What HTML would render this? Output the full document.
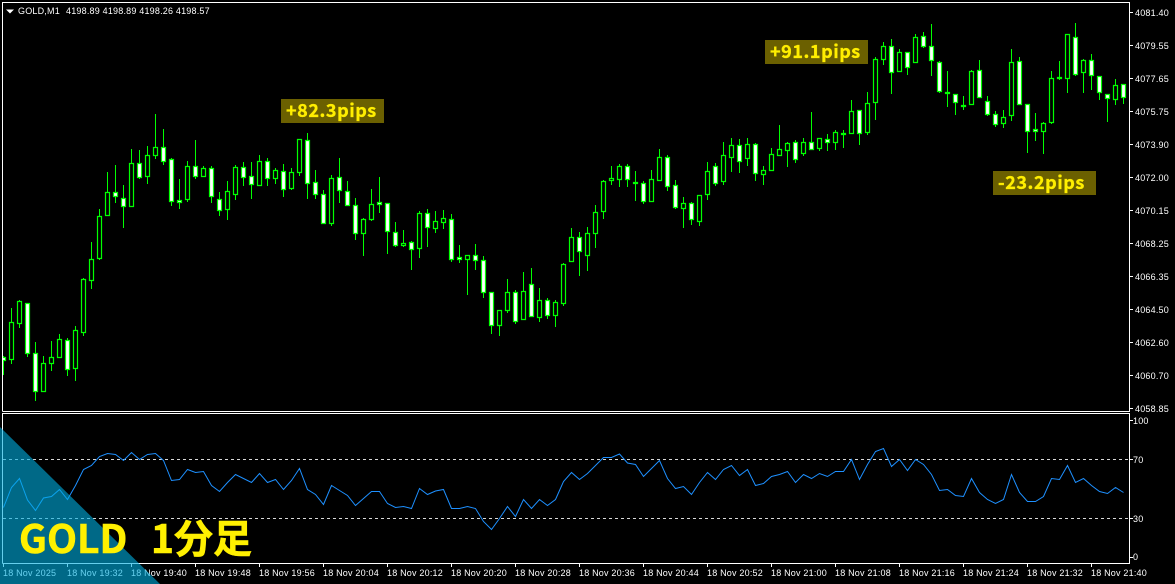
<!DOCTYPE html>
<html><head><meta charset="utf-8"><title>GOLD M1</title>
<style>
html,body{margin:0;padding:0;background:#000;width:1175px;height:584px;overflow:hidden}
svg{display:block}
.t{font:9px "Liberation Sans",sans-serif;fill:#fff;letter-spacing:.2px}
.p{font:bold 18px "Noto Sans CJK JP","Liberation Sans",sans-serif;fill:#ffee00;stroke:#ffee00;stroke-width:.35px;letter-spacing:.55px}
.g{font:bold 39px "Noto Sans CJK JP","Liberation Sans",sans-serif;fill:#fff000;stroke:#fff000;stroke-width:.6px}
</style></head><body>
<svg width="1175" height="584" viewBox="0 0 1175 584" xmlns="http://www.w3.org/2000/svg">
<defs><clipPath id="c"><rect x="3" y="3" width="1126" height="408"/></clipPath></defs>
<rect width="1175" height="584" fill="#000"/>
<g clip-path="url(#c)" stroke="#00ff00" stroke-width="1.2">
<path fill="none" stroke-width="1" d="M3.5 356V375M11.5 308V364M19.5 300V328M27.5 303V357M35.5 342V401M43.5 356V392M51.5 341V371M59.5 334V358M67.5 338V376M75.5 326V381M83.5 278V336M91.5 242V289M99.5 209V260M107.5 172V216M115.5 165V203M123.5 185V228M131.5 149V207M139.5 150V179M147.5 146V184M155.5 114V159M163.5 129V165M171.5 158V206M179.5 179V209M187.5 161V202M195.5 140V179M203.5 166V177M211.5 166V203M219.5 192V216M227.5 181V220M235.5 165V200M243.5 162V186M251.5 162V199M259.5 155V186M267.5 158V186M275.5 168V184M283.5 164V197M291.5 168V190M299.5 139V176M307.5 133V199M315.5 170V199M323.5 190V224M331.5 175V226M339.5 158V203M347.5 181V206M355.5 198V240M363.5 218V256M371.5 189V221M379.5 177V213M387.5 203V254M395.5 222V247M403.5 230V247M411.5 241V270M419.5 211V258M427.5 209V247M435.5 211V233M443.5 210V229M451.5 214V262M459.5 245V263M467.5 255V295M475.5 244V270M483.5 256V298M491.5 292V334M499.5 310V336M507.5 279V313M515.5 290V324M523.5 272V320M531.5 268V317M539.5 288V322M547.5 298V319M555.5 300V327M563.5 263V306M571.5 228V262M579.5 232V276M587.5 227V271M595.5 205V248M603.5 180V219M611.5 166V185M619.5 164V187M627.5 164V187M635.5 171V201M643.5 181V204M651.5 170V202M659.5 149V181M667.5 155V191M675.5 180V209M683.5 197V228M691.5 202V225M699.5 195V226M707.5 162V200M715.5 163V186M723.5 142V185M731.5 138V172M739.5 139V173M747.5 138V166M755.5 143V181M763.5 166V185M771.5 148V171M779.5 125V156M787.5 142V167M795.5 140V163M803.5 138V156M811.5 112V150M819.5 138V151M827.5 134V151M835.5 130V150M843.5 130V148M851.5 100V134M859.5 110V145M867.5 92V135M875.5 57V120M883.5 42V65M891.5 39V94M899.5 49V72M907.5 52V75M915.5 34V63M923.5 32V48M931.5 24V76M939.5 61V93M947.5 71V107M955.5 94V115M963.5 96V110M971.5 70V105M979.5 60V98M987.5 96V116M995.5 111V127M1003.5 110V128M1011.5 49V121M1019.5 57V105M1027.5 104V153M1035.5 113V141M1043.5 122V154M1051.5 71V124M1059.5 61V80M1067.5 34V93M1075.5 23V76M1083.5 59V93M1091.5 54V90M1099.5 76V100M1107.5 94V122M1115.5 79V105M1123.5 84V104"/>
<path fill="#000" d="M9.5 322.5h4V359.5h-4zM17.5 301.5h4V323.5h-4zM41.5 363.5h4V391.5h-4zM49.5 357.5h4V363.5h-4zM57.5 339.5h4V357.5h-4zM73.5 330.5h4V368.5h-4zM81.5 279.5h4V332.5h-4zM89.5 259.5h4V280.5h-4zM97.5 216.5h4V258.5h-4zM105.5 192.5h4V215.5h-4zM129.5 163.5h4V206.5h-4zM145.5 155.5h4V176.5h-4zM153.5 147.5h4V155.5h-4zM185.5 166.5h4V199.5h-4zM201.5 168.5h4V176.5h-4zM225.5 191.5h4V209.5h-4zM233.5 167.5h4V194.5h-4zM257.5 161.5h4V185.5h-4zM273.5 170.5h4V178.5h-4zM289.5 172.5h4V188.5h-4zM297.5 139.5h4V172.5h-4zM329.5 178.5h4V223.5h-4zM361.5 219.5h4V233.5h-4zM369.5 204.5h4V219.5h-4zM401.5 243.5h4V245.5h-4zM417.5 213.5h4V248.5h-4zM433.5 221.5h4V228.5h-4zM441.5 218.5h4V222.5h-4zM465.5 255.5h4V259.5h-4zM497.5 310.5h4V325.5h-4zM505.5 292.5h4V310.5h-4zM521.5 291.5h4V319.5h-4zM537.5 300.5h4V317.5h-4zM553.5 302.5h4V315.5h-4zM561.5 264.5h4V303.5h-4zM569.5 237.5h4V261.5h-4zM585.5 233.5h4V255.5h-4zM593.5 212.5h4V233.5h-4zM601.5 181.5h4V211.5h-4zM609.5 178.5h4V180.5h-4zM617.5 166.5h4V179.5h-4zM649.5 179.5h4V201.5h-4zM657.5 157.5h4V180.5h-4zM681.5 203.5h4V208.5h-4zM697.5 195.5h4V221.5h-4zM705.5 171.5h4V194.5h-4zM721.5 155.5h4V181.5h-4zM729.5 145.5h4V157.5h-4zM745.5 144.5h4V158.5h-4zM761.5 170.5h4V174.5h-4zM769.5 154.5h4V170.5h-4zM777.5 149.5h4V155.5h-4zM785.5 143.5h4V150.5h-4zM801.5 142.5h4V153.5h-4zM817.5 138.5h4V148.5h-4zM833.5 132.5h4V142.5h-4zM849.5 111.5h4V133.5h-4zM865.5 103.5h4V132.5h-4zM873.5 59.5h4V102.5h-4zM881.5 46.5h4V59.5h-4zM897.5 52.5h4V71.5h-4zM913.5 37.5h4V62.5h-4zM969.5 71.5h4V104.5h-4zM1001.5 117.5h4V123.5h-4zM1009.5 62.5h4V115.5h-4zM1041.5 123.5h4V131.5h-4zM1049.5 78.5h4V122.5h-4zM1065.5 34.5h4V78.5h-4zM1081.5 60.5h4V72.5h-4zM1113.5 85.5h4V99.5h-4z"/>
<path fill="#fff" d="M1.5 357.5h4V360.5h-4zM25.5 303.5h4V353.5h-4zM33.5 353.5h4V391.5h-4zM65.5 340.5h4V369.5h-4zM113.5 192.5h4V196.5h-4zM121.5 198.5h4V206.5h-4zM137.5 163.5h4V177.5h-4zM161.5 147.5h4V161.5h-4zM169.5 159.5h4V201.5h-4zM177.5 200.5h4V202.5h-4zM193.5 166.5h4V176.5h-4zM209.5 168.5h4V196.5h-4zM217.5 199.5h4V210.5h-4zM241.5 167.5h4V177.5h-4zM249.5 176.5h4V184.5h-4zM265.5 161.5h4V178.5h-4zM281.5 171.5h4V189.5h-4zM305.5 140.5h4V183.5h-4zM313.5 182.5h4V194.5h-4zM321.5 194.5h4V223.5h-4zM337.5 177.5h4V190.5h-4zM345.5 191.5h4V205.5h-4zM353.5 205.5h4V233.5h-4zM377.5 202.5h4V204.5h-4zM385.5 203.5h4V231.5h-4zM393.5 232.5h4V245.5h-4zM409.5 242.5h4V249.5h-4zM425.5 213.5h4V227.5h-4zM449.5 219.5h4V259.5h-4zM457.5 257.5h4V259.5h-4zM473.5 255.5h4V260.5h-4zM481.5 260.5h4V292.5h-4zM489.5 292.5h4V325.5h-4zM513.5 292.5h4V321.5h-4zM529.5 284.5h4V316.5h-4zM545.5 300.5h4V315.5h-4zM577.5 237.5h4V251.5h-4zM625.5 166.5h4V179.5h-4zM641.5 183.5h4V201.5h-4zM665.5 157.5h4V186.5h-4zM673.5 185.5h4V207.5h-4zM689.5 203.5h4V219.5h-4zM713.5 166.5h4V183.5h-4zM737.5 145.5h4V161.5h-4zM753.5 144.5h4V173.5h-4zM793.5 142.5h4V159.5h-4zM809.5 142.5h4V149.5h-4zM825.5 139.5h4V142.5h-4zM857.5 110.5h4V133.5h-4zM889.5 46.5h4V72.5h-4zM905.5 52.5h4V67.5h-4zM921.5 36.5h4V46.5h-4zM929.5 46.5h4V60.5h-4zM937.5 62.5h4V91.5h-4zM953.5 94.5h4V102.5h-4zM977.5 70.5h4V97.5h-4zM985.5 101.5h4V114.5h-4zM993.5 114.5h4V124.5h-4zM1017.5 61.5h4V104.5h-4zM1025.5 104.5h4V131.5h-4zM1033.5 129.5h4V131.5h-4zM1057.5 77.5h4V78.5h-4zM1073.5 37.5h4V74.5h-4zM1089.5 60.5h4V75.5h-4zM1097.5 76.5h4V92.5h-4zM1105.5 94.5h4V98.5h-4zM1121.5 84.5h4V97.5h-4z"/>
<path fill="#00ff00" d="M633.5 182.5h4V183.5h-4zM841.5 133.5h4V134.5h-4zM945.5 92.5h4V93.5h-4zM961.5 105.5h4V106.5h-4z"/>
</g>
<!-- frames -->
<path fill="none" stroke="#fff" d="M2.5 411.5V2.5H1129.5V411.5H2.5M2.5 563.5V413.5H1129.5V563.5H2.5"/>
<!-- price ticks -->
<path stroke="#fff" fill="none" d="M1130 12.5h3M1130 45.5h3M1130 78.5h3M1130 111.5h3M1130 144.5h3M1130 177.5h3M1130 210.5h3M1130 243.5h3M1130 276.5h3M1130 309.5h3M1130 342.5h3M1130 375.5h3M1130 408.5h3M1130 420.5h3M1130 459.5h3M1130 518.5h3M1130 557.5h3"/>
<path stroke="#fff" fill="none" d="M3.5 564v3M67.5 564v3M131.5 564v3M195.5 564v3M259.5 564v3M323.5 564v3M387.5 564v3M451.5 564v3M515.5 564v3M579.5 564v3M643.5 564v3M707.5 564v3M771.5 564v3M835.5 564v3M899.5 564v3M963.5 564v3M1027.5 564v3M1091.5 564v3"/>
<!-- RSI -->
<path stroke="#d8d8d8" stroke-dasharray="3 3" fill="none" d="M3 459.5H1129M3 518.5H1129"/>
<polyline fill="none" stroke="#1e90ff" stroke-width="1" points="3.5,507.5 11.5,487.5 19.5,478.5 27.5,500 35.5,510.5 43.5,498 51.5,496.5 59.5,489.5 67.5,499.5 75.5,485.5 83.5,469.5 91.5,465.5 99.5,456.5 107.5,453.5 115.5,454.5 123.5,460.5 131.5,452.5 139.5,459.5 147.5,454.5 155.5,453.5 163.5,460.5 171.5,480.5 179.5,479.5 187.5,469.5 195.5,472.5 203.5,471.5 211.5,485.5 219.5,491.5 227.5,482.5 235.5,474.5 243.5,478.5 251.5,482.5 259.5,473.5 267.5,482.5 275.5,479.5 283.5,489.5 291.5,480.5 299.5,468.5 307.5,489.5 315.5,494.5 323.5,504.5 331.5,485.5 339.5,490.5 347.5,495.5 355.5,505.5 363.5,498.5 371.5,491.5 379.5,491.5 387.5,503.5 395.5,507.5 403.5,506.5 411.5,508.5 419.5,488.5 427.5,494.5 435.5,491 443.5,489.5 451.5,508.5 459.5,508.5 467.5,506.5 475.5,508.5 483.5,521.5 491.5,529.5 499.5,518.5 507.5,506.5 515.5,516.5 523.5,499.5 531.5,508.5 539.5,499.5 547.5,505.5 555.5,499.5 563.5,481.5 571.5,472.5 579.5,479.5 587.5,473.5 595.5,465.5 603.5,457.5 611.5,457.5 619.5,454 627.5,463 635.5,464.5 643.5,476.5 651.5,468.5 659.5,460.5 667.5,478.5 675.5,488.5 683.5,486.5 691.5,494.5 699.5,482.5 707.5,472.5 715.5,479.5 723.5,469.5 731.5,465.5 739.5,475.5 747.5,469.5 755.5,485.5 763.5,483.5 771.5,476.5 779.5,474.5 787.5,471.5 795.5,482.5 803.5,474.5 811.5,478.5 819.5,473.5 827.5,476.5 835.5,471.5 843.5,471.5 851.5,459.5 859.5,479.5 867.5,464.5 875.5,451.5 883.5,448.5 891.5,466.5 899.5,459.5 907.5,470.5 915.5,459.5 923.5,464.5 931.5,474.5 939.5,490.5 947.5,489.5 955.5,495.5 963.5,496.5 971.5,478.5 979.5,492.5 987.5,499.5 995.5,503.5 1003.5,499.5 1011.5,474.5 1019.5,492.5 1027.5,501.5 1035.5,501.5 1043.5,496.5 1051.5,478.5 1059.5,479.5 1067.5,465.5 1075.5,482.5 1083.5,478.5 1091.5,485.5 1099.5,491.5 1107.5,493.5 1115.5,487.5 1123.5,492.5"/>
<!-- header -->
<path fill="#fff" d="M6 9.5h8l-4 4z"/>
<text class="t" x="18" y="14">GOLD,M1</text>
<text class="t" x="66" y="14">4198.89 4198.89 4198.26 4198.57</text>
<!-- price labels -->
<g class="t">
<text class="t" x="1135" y="16">4081.40</text>
<text class="t" x="1135" y="49">4079.55</text>
<text class="t" x="1135" y="82">4077.65</text>
<text class="t" x="1135" y="115">4075.75</text>
<text class="t" x="1135" y="148">4073.90</text>
<text class="t" x="1135" y="181">4072.00</text>
<text class="t" x="1135" y="214">4070.15</text>
<text class="t" x="1135" y="247">4068.25</text>
<text class="t" x="1135" y="280">4066.35</text>
<text class="t" x="1135" y="313">4064.50</text>
<text class="t" x="1135" y="346">4062.60</text>
<text class="t" x="1135" y="379">4060.70</text>
<text class="t" x="1135" y="412">4058.85</text>
<text class="t" x="1133" y="424">100</text>
<text class="t" x="1133" y="463">70</text>
<text class="t" x="1133" y="522">30</text>
<text class="t" x="1133" y="560">0</text>
</g>
<!-- time labels -->
<text class="t" x="3" y="576">18 Nov 2025</text>
<text class="t" x="67" y="576">18 Nov 19:32</text>
<text class="t" x="131" y="576">18 Nov 19:40</text>
<text class="t" x="195" y="576">18 Nov 19:48</text>
<text class="t" x="259" y="576">18 Nov 19:56</text>
<text class="t" x="323" y="576">18 Nov 20:04</text>
<text class="t" x="387" y="576">18 Nov 20:12</text>
<text class="t" x="451" y="576">18 Nov 20:20</text>
<text class="t" x="515" y="576">18 Nov 20:28</text>
<text class="t" x="579" y="576">18 Nov 20:36</text>
<text class="t" x="643" y="576">18 Nov 20:44</text>
<text class="t" x="707" y="576">18 Nov 20:52</text>
<text class="t" x="771" y="576">18 Nov 21:00</text>
<text class="t" x="835" y="576">18 Nov 21:08</text>
<text class="t" x="899" y="576">18 Nov 21:16</text>
<text class="t" x="963" y="576">18 Nov 21:24</text>
<text class="t" x="1027" y="576">18 Nov 21:32</text>
<text class="t" x="1091" y="576">18 Nov 21:40</text>
<!-- pip labels -->
<rect x="281" y="99" width="103" height="24" fill="#6b6000"/>
<text class="p" x="286" y="117">+82.3pips</text>
<rect x="765" y="40" width="103" height="24" fill="#6b6000"/>
<text class="p" x="770" y="58">+91.1pips</text>
<rect x="993" y="171" width="103" height="24" fill="#6b6000"/>
<text class="p" x="998" y="189">-23.2pips</text>
<!-- teal corner -->
<path fill="#00afe1" fill-opacity=".6" d="M0 427L160 584H0z"/>
<text class="g" x="19" y="553">GOLD</text>
<text class="g" x="151" y="553">1分足</text>
</svg>
</body></html>
